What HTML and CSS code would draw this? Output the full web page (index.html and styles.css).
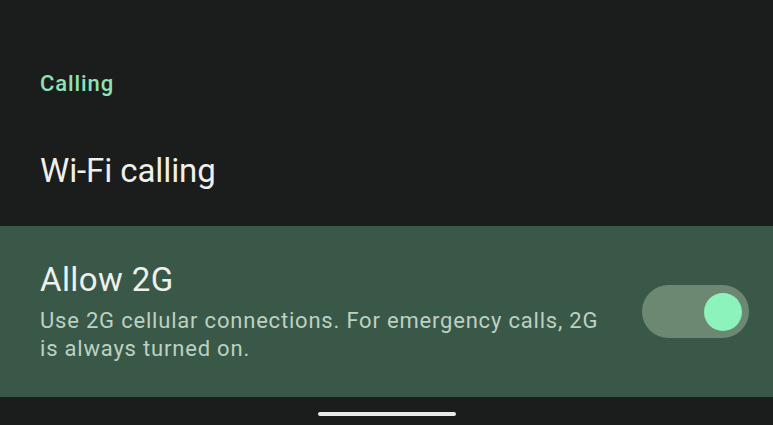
FILE: index.html
```html
<!DOCTYPE html>
<html lang="en">
<head>
  <meta charset="UTF-8" />
  <meta name="viewport" content="width=device-width, initial-scale=1" />
  <title>Calling settings</title>
  <link rel="stylesheet" href="styles.css">
</head>
<body>

  <main class="settings">
    <h2 class="category">Calling</h2>

    <div class="pref pref-simple">
      <span class="pref-title">Wi-Fi calling</span>
    </div>

    <div class="pref pref-highlight">
      <div class="pref-text">
        <div class="pref-title">Allow 2G</div>
        <div class="pref-summary">Use 2G cellular connections. For emergency calls, 2G is always turned on.</div>
      </div>
      <button class="switch on" aria-pressed="true" aria-label="Allow 2G"><span class="thumb"></span></button>
    </div>
  </main>

  <footer class="nav-bar">
    <span class="home-handle"></span>
  </footer>

</body>
</html>
```

FILE: styles.css
```css
* {
  box-sizing: border-box;
}
body {
  margin: 0;
  height: 425px;
  overflow: hidden;
  background: #1b1c1c;
  font-family: Roboto, 'Noto Sans', sans-serif;
  display: flex;
  flex-direction: column;
}

.settings {
  display: flex;
  flex-direction: column;
}

/* Encabezado de la categoria */
.category {
  margin: 0;
  padding: 70px 40px 0;
  font-size: 22px;
  line-height: 28px;
  font-weight: 500;
  letter-spacing: 0.9px;
  color: #8fe2b6;
}

.pref {
  display: flex;
  align-items: center;
  padding: 0 24px 0 40px;
}
.pref-title {
  font-size: 33px;
  line-height: 40px;
  letter-spacing: -0.1px;
  color: #eef0ec;
}

.pref-simple {
  height: 128px;
  padding-top: 18px;
}

.pref-highlight {
  height: 171px;
  background: #3a5847;
}
.pref-highlight .pref-title {
  letter-spacing: 0.4px;
}
.pref-text {
  width: 565px;
  flex: none;
}
.pref-summary {
  margin-top: 7px;
  font-size: 22px;
  line-height: 28px;
  letter-spacing: 0.8px;
  color: #bdd1c2;
}

/* Switch */
.switch {
  margin-left: auto;
  width: 107px;
  height: 53px;
  border: none;
  border-radius: 27px;
  background: #6c8873;
  padding: 0 7px;
  display: flex;
  align-items: center;
  justify-content: flex-end;
  cursor: pointer;
}
.switch .thumb {
  width: 38px;
  height: 38px;
  border-radius: 50%;
  background: #8cf3bd;
}

/* Barra de navegacion */
.nav-bar {
  flex: 1;
  display: flex;
  justify-content: center;
  padding-top: 15px;
}
.home-handle {
  width: 138px;
  height: 4px;
  border-radius: 2px;
  background: #e9e9e9;
}
```
